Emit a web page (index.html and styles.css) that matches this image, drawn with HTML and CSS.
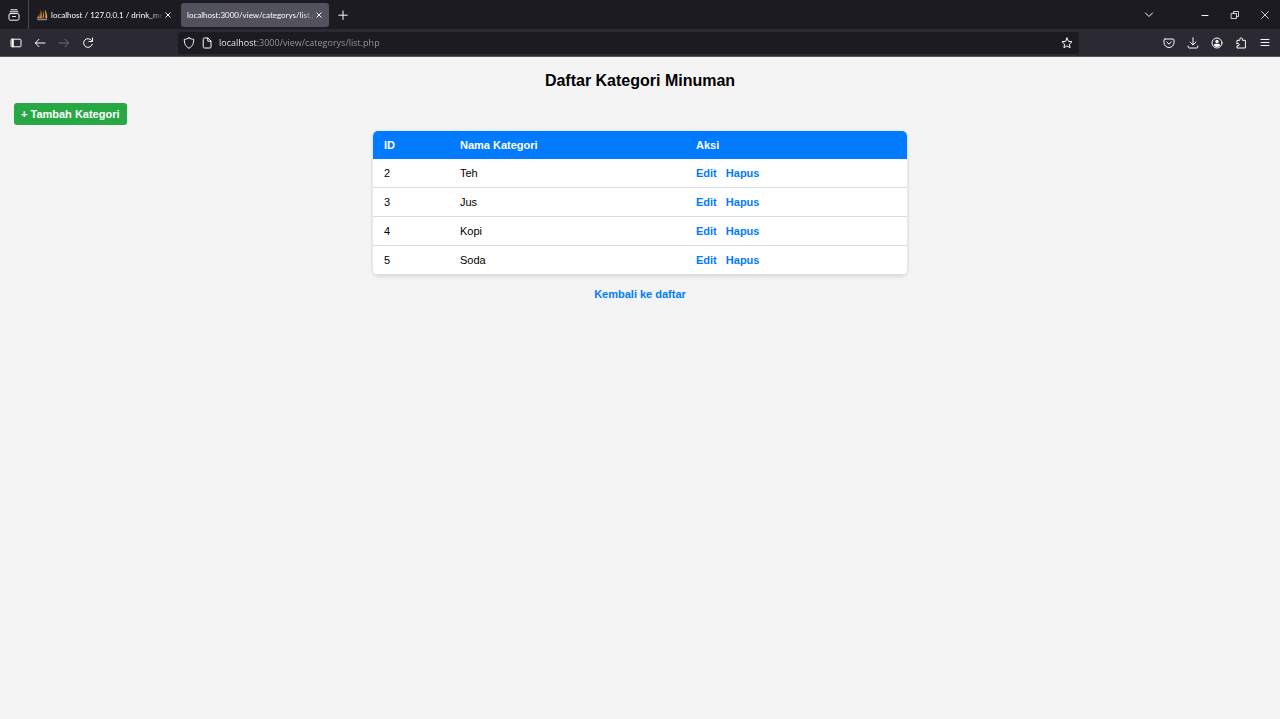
FILE: index.html
```html
<!DOCTYPE html>
<html lang="id">
<head>
<meta charset="utf-8">
<meta name="viewport" content="width=device-width, initial-scale=1">
<title>Daftar Kategori Minuman</title>
<link rel="stylesheet" href="styles.css">
</head>
<body>
<header class="browser">
  <div class="tabbar">
    <button class="tab-overview" aria-label="Tab view"><svg class="icon" viewBox="0 0 12 12"><path d="M3 .8h6M2 2.8h8"/><rect x="1" y="4.600" width="10" height="6.600" rx="1.400"/><path d="M4.500 7.500h3"/></svg></button>
    <div class="tab tab-first">
      <svg class="favicon" viewBox="0 0 12 12"><path fill="#e98b2a" d="M3.600 2.500C3.800 5 2.500 7.500.6 9.300h2.600zM4.600 1C6 3.500 6 6.500 5.600 9.300H3.200C4.600 6.500 4.900 4 4.600 1z"/><path fill="#f4a94c" d="M8.600.6c2 2.200 2.600 5.400 2.600 8.700H9.300C9.600 6 9.400 3 8.600.6zM7.500 2c.8 2.500.6 5-.1 7.300H6.200C7.200 7 7.500 4.500 7.500 2z"/><path fill="#8b8998" d="M.5 9.700h11l-1 1.500H2z"/></svg>
      <span class="tab-title">localhost / 127.0.0.1 / drink_menu</span>
      <button class="tab-close" aria-label="Close tab"><svg viewBox="0 0 8 8"><path d="M1.500 1.500l5 5M6.500 1.500l-5 5"/></svg></button>
    </div>
    <div class="tab tab-active">
      <span class="tab-title">localhost:3000/view/categorys/list.php</span>
      <button class="tab-close" aria-label="Close tab"><svg viewBox="0 0 8 8"><path d="M1.500 1.500l5 5M6.500 1.500l-5 5"/></svg></button>
    </div>
    <button class="tool new-tab" aria-label="New tab"><svg class="icon" viewBox="0 0 12 12"><path d="M6 2v8.500M1.800 6.200h8.500"/></svg></button>
    <button class="tool all-tabs" aria-label="List all tabs"><svg class="icon" viewBox="0 0 12 12"><path d="M2.500 4L6 7.500 9.500 4"/></svg></button>
    <div class="window-controls">
      <button class="window-button" aria-label="Minimize"><svg class="icon" viewBox="0 0 12 12"><path d="M3 6.500h6"/></svg></button>
      <button class="window-button" aria-label="Restore"><svg class="icon thin" viewBox="0 0 12 12"><path d="M2.500 4.500h5v5h-5zM4.500 4.500v-2h5v5h-2"/></svg></button>
      <button class="window-button" aria-label="Close"><svg class="icon thin" viewBox="0 0 12 12"><path d="M2.500 2.500l7 7M9.500 2.500l-7 7"/></svg></button>
    </div>
  </div>
  <div class="toolbar">
    <button class="tool" aria-label="Sidebar"><svg class="icon" viewBox="0 0 12 12"><rect x="1" y="2.200" width="10" height="7.600" rx="1"/><path stroke-width="2" d="M2.800 2.800v6.400"/></svg></button>
    <button class="tool" aria-label="Back"><svg class="icon" viewBox="0 0 12 12"><path d="M11 6H1.500M5 2.300L1.300 6 5 9.700"/></svg></button>
    <button class="tool disabled" aria-label="Forward" disabled><svg class="icon" viewBox="0 0 12 12"><path d="M1 6h9.500M7 2.300L10.700 6 7 9.700"/></svg></button>
    <button class="tool" aria-label="Reload"><svg class="icon" viewBox="0 0 12 12"><path d="M10.300 7.200A4.400 4.400 0 1 1 9.600 3.400M10.500 1v3.500H7"/></svg></button>
    <form class="urlbar">
      <svg class="icon" viewBox="0 0 12 12"><path d="M6 .8c1.400 1 3 1.500 4.700 1.500 0 4-1 7-4.700 9-3.700-2-4.700-5-4.700-9C3 2.300 4.600 1.800 6 .8z"/></svg>
      <svg class="icon" viewBox="0 0 12 12"><path d="M2.200 2c0-.6.400-1 1-1H7l3 3v6c0 .6-.4 1-1 1H3.200c-.6 0-1-.4-1-1zM6.800 1.200v3h3"/></svg>
      <input class="url" type="text" aria-label="Address" value="localhost:3000/view/categorys/list.php">
      <button class="tool" type="button" aria-label="Bookmark"><svg class="icon" viewBox="0 0 12 12"><path d="M6 1l1.500 3.300 3.500.4-2.600 2.400.7 3.600L6 8.900l-3.100 1.800.7-3.600L1 4.700l3.500-.4z"/></svg></button>
    </form>
    <button class="tool" aria-label="Pocket"><svg class="icon" viewBox="0 0 12 12"><path d="M2 2h8c.6 0 1 .4 1 1v2.500a5 5 0 0 1-10 0V3c0-.6.400-1 1-1zM3.700 5L6 7.200 8.300 5"/></svg></button>
    <button class="tool" aria-label="Downloads"><svg class="icon" viewBox="0 0 12 12"><path d="M6 .8v7M3 5l3 3 3-3M1.200 9v1c0 .6.400 1 1 1h7.600c.6 0 1-.4 1-1V9"/></svg></button>
    <button class="tool" aria-label="Account"><svg class="icon" viewBox="0 0 12 12"><circle cx="6" cy="6" r="5"/><circle class="solid" cx="6" cy="4.500" r="1.700"/><path class="solid" d="M2.800 8.500c0-1 .8-1.700 1.700-1.700h3c.9 0 1.700.7 1.700 1.700-1.500 1.900-4.900 1.900-6.400 0z"/></svg></button>
    <button class="tool" aria-label="Extensions"><svg class="icon" viewBox="0 0 12 12"><path d="M2 5.500V3.300h2.800V2.200c0-1.800 2.600-1.800 2.600 0v1.100h3V11H2V8.800h1c1.700 0 1.700-2.200 0-2.200H1.500"/></svg></button>
    <button class="tool" aria-label="Menu"><svg class="icon" viewBox="0 0 12 12"><path d="M2 2.500h8M2 5.500h8M2 8.500h8"/></svg></button>
  </div>
</header>
<main class="page">
  <h1 class="title">Daftar Kategori Minuman</h1>
  <a class="add-button" href="#">+ Tambah Kategori</a>
  <table class="categories">
    <colgroup><col class="col-id"><col class="col-name"><col></colgroup>
    <thead><tr><th>ID</th><th>Nama Kategori</th><th>Aksi</th></tr></thead>
    <tbody>
      <tr><td>2</td><td>Teh</td><td><a class="action" href="#">Edit</a> <a class="action" href="#">Hapus</a></td></tr>
      <tr><td>3</td><td>Jus</td><td><a class="action" href="#">Edit</a> <a class="action" href="#">Hapus</a></td></tr>
      <tr><td>4</td><td>Kopi</td><td><a class="action" href="#">Edit</a> <a class="action" href="#">Hapus</a></td></tr>
      <tr><td>5</td><td>Soda</td><td><a class="action" href="#">Edit</a> <a class="action" href="#">Hapus</a></td></tr>
    </tbody>
  </table>
  <a class="back-link" href="#">Kembali ke daftar</a>
</main>
</body>
</html>
```
FILE: styles.css
```css
* { box-sizing: border-box; }

body {
  margin: 0;
  background: #f4f4f4;
  color: #000;
  font: 11px/12px "Liberation Sans", Arial, sans-serif;
}

button {
  padding: 0;
  border: 0;
  background: none;
  color: inherit;
}

/* Browser chrome */
.browser {
  color: #fbfbfe;
  font-family: "Open Sans", "Noto Sans", sans-serif;
}

.icon {
  display: block;
  flex: none;
  width: 12px;
  height: 12px;
  fill: none;
  stroke: currentColor;
  stroke-width: 1;
  stroke-linecap: round;
  stroke-linejoin: round;
}

.icon .solid { fill: currentColor; stroke: none; }
.thin { stroke-width: 0.8; }

.tabbar {
  display: flex;
  align-items: center;
  height: 29px;
  background: #1c1b22;
}

.tab-overview {
  display: grid;
  place-items: center;
  width: 29px;
  height: 29px;
  border-right: 1px solid #4a4953;
}

.tab {
  display: flex;
  align-items: center;
  width: 148px;
  height: 24px;
  padding: 0 6px;
  border-radius: 3px;
  font-family: Lato, "Open Sans", sans-serif;
  font-size: 8px;
}

.tab-first { padding: 0 5px 0 7px; }
.tab-active { margin-left: 4px; background: #52525e; }

.favicon { flex: none; width: 12px; height: 12px; margin-right: 3px; }

.tab-title {
  flex: 1;
  overflow: hidden;
  white-space: nowrap;
  mask-image: linear-gradient(to left, transparent, #000 12px);
}

.tab-close { width: 8px; height: 8px; margin-left: 1px; }

.tab-close svg {
  display: block;
  fill: none;
  stroke: currentColor;
  stroke-width: 1;
}

.tool {
  display: grid;
  flex: none;
  place-items: center;
  width: 24px;
  height: 24px;
}

.disabled { color: #706f7a; }
.new-tab { margin-left: 2px; }
.all-tabs { margin-left: auto; }

.window-controls { display: flex; margin-left: 29px; }

.window-button {
  display: grid;
  place-items: center;
  width: 30px;
  height: 29px;
}

.toolbar {
  display: flex;
  align-items: center;
  height: 28px;
  padding: 0 3px 0 4px;
  border-bottom: 1px solid #55545f;
  background: #2b2a33;
}

.urlbar {
  display: flex;
  flex: 1;
  align-items: center;
  gap: 6px;
  height: 22px;
  margin: 0 78px;
  padding-left: 5px;
  border-radius: 3px;
  background: #1c1b22;
}

/* The host is brighter than the rest of the address */
.url {
  flex: 1;
  min-width: 0;
  padding: 0;
  border: 0;
  outline: 0;
  background: linear-gradient(to right, #fbfbfe 38px, #9a99a3 38px);
  background-clip: text;
  color: transparent;
  font: 9px/18px "Open Sans", "Noto Sans", sans-serif;
}

/* Page */
.page {
  display: flex;
  flex-direction: column;
  align-items: center;
  padding: 13px 14px;
}

.title { margin: 0 0 12px; font-size: 16px; line-height: 21px; }

.add-button {
  align-self: flex-start;
  margin-bottom: 6px;
  padding: 5px 7px;
  border-radius: 3px;
  background: #28a745;
  color: #fff;
  font-weight: bold;
  text-decoration: none;
}

.categories {
  width: 100%;
  max-width: 534px;
  margin-bottom: 13px;
  overflow: hidden;
  border-spacing: 0;
  border-radius: 5px;
  background: #fff;
  box-shadow: 0 1px 4px rgba(0, 0, 0, 0.15);
  table-layout: fixed;
}

.col-id { width: 76px; }
.col-name { width: 236px; }

.categories th,
.categories td { padding: 8px 11px; text-align: left; }

.categories th { background: #007bff; color: #fff; }
.categories td { border-bottom: 1px solid #ddd; }

.action,
.back-link { color: #007bff; font-weight: bold; text-decoration: none; }

.action { margin-right: 6px; }
```
